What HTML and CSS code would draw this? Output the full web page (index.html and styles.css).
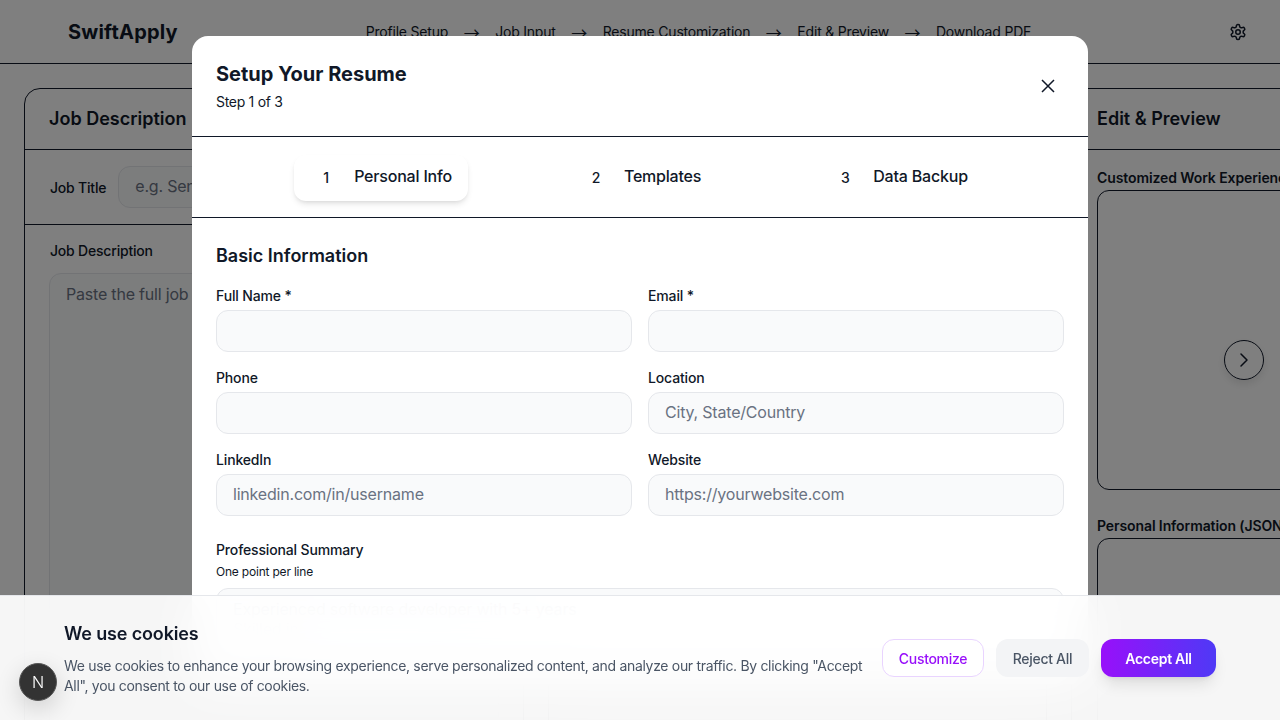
FILE: index.html
```html
<!DOCTYPE html>
<html lang="en">
<head>
  <meta charset="UTF-8">
  <meta name="viewport" content="width=device-width, initial-scale=1.0">
  <title>SwiftApply</title>
  <link rel="stylesheet" href="styles.css">
</head>
<body>
  <header class="topbar">
    <div class="brand">SwiftApply</div>
    <nav class="steps">
      <span>Profile Setup</span><span class="arrow">→</span>
      <span>Job Input</span><span class="arrow">→</span>
      <span>Resume Customization</span><span class="arrow">→</span>
      <span>Edit &amp; Preview</span><span class="arrow">→</span>
      <span>Download PDF</span>
    </nav>
    <button class="icon-btn" title="Settings">
      <svg width="18" height="18" viewBox="0 0 24 24" fill="none" stroke="currentColor" stroke-width="2" stroke-linecap="round" stroke-linejoin="round">
        <path d="M12.22 2h-.44a2 2 0 0 0-2 2v.18a2 2 0 0 1-1 1.73l-.43.25a2 2 0 0 1-2 0l-.15-.08a2 2 0 0 0-2.73.73l-.22.38a2 2 0 0 0 .73 2.73l.15.1a2 2 0 0 1 1 1.72v.51a2 2 0 0 1-1 1.74l-.15.09a2 2 0 0 0-.73 2.73l.22.38a2 2 0 0 0 2.73.73l.15-.08a2 2 0 0 1 2 0l.43.25a2 2 0 0 1 1 1.73V20a2 2 0 0 0 2 2h.44a2 2 0 0 0 2-2v-.18a2 2 0 0 1 1-1.73l.43-.25a2 2 0 0 1 2 0l.15.08a2 2 0 0 0 2.73-.73l.22-.39a2 2 0 0 0-.73-2.73l-.15-.08a2 2 0 0 1-1-1.74v-.5a2 2 0 0 1 1-1.74l.15-.09a2 2 0 0 0 .73-2.73l-.22-.38a2 2 0 0 0-2.73-.73l-.15.08a2 2 0 0 1-2 0l-.43-.25a2 2 0 0 1-1-1.73V4a2 2 0 0 0-2-2z"/>
        <circle cx="12" cy="12" r="3"/>
      </svg>
    </button>
  </header>

  <main class="board">
    <section class="panel">
      <h2 class="panel-title tight">Job Description</h2>
      <div class="job-row">
        <label class="small-label">Job Title</label>
        <input class="field job-input" placeholder="e.g. Senior Software Engineer">
      </div>
      <div class="panel-body">
        <label class="small-label indent">Job Description</label>
        <textarea class="field job-text" placeholder="Paste the full job description here..."></textarea>
      </div>
    </section>
    <section class="panel middle"></section>
    <section class="panel">
      <h2 class="panel-title">Edit &amp; Preview</h2>
      <div class="panel-body preview">
        <label class="bold-label">Customized Work Experience</label>
        <div class="preview-box tall"></div>
        <label class="bold-label">Personal Information (JSON)</label>
        <div class="preview-box"></div>
      </div>
    </section>
  </main>

  <button class="next-btn" title="Next">
    <svg width="24" height="24" viewBox="0 0 24 24" fill="none" stroke="currentColor" stroke-width="1.5" stroke-linecap="round" stroke-linejoin="round"><path d="m9 18 6-6-6-6"/></svg>
  </button>

  <div class="overlay">
    <div class="modal">
      <div class="modal-head">
        <div>
          <h2 class="modal-title">Setup Your Resume</h2>
          <p class="modal-sub">Step 1 of 3</p>
        </div>
        <button class="close-btn" title="Close">
          <svg width="24" height="24" viewBox="0 0 24 24" fill="none" stroke="currentColor" stroke-width="1.5"><path d="M18 6 6 18M6 6l12 12"/></svg>
        </button>
      </div>
      <div class="tabs">
        <div class="tab active"><span class="tab-num">1</span>Personal Info</div>
        <div class="tab"><span class="tab-num">2</span>Templates</div>
        <div class="tab"><span class="tab-num">3</span>Data Backup</div>
      </div>
      <div class="form">
        <h3 class="form-title">Basic Information</h3>
        <div class="form-grid">
          <div><label class="form-label">Full Name *</label><input class="field"></div>
          <div><label class="form-label">Email *</label><input class="field"></div>
          <div><label class="form-label">Phone</label><input class="field"></div>
          <div><label class="form-label">Location</label><input class="field" placeholder="City, State/Country"></div>
          <div><label class="form-label">LinkedIn</label><input class="field" placeholder="linkedin.com/in/username"></div>
          <div><label class="form-label">Website</label><input class="field" placeholder="https://yourwebsite.com"></div>
        </div>
        <label class="form-label summary-label">Professional Summary</label>
        <p class="hint">One point per line</p>
        <textarea class="field summary" placeholder="Experienced software developer with 5+ years
Skilled in"></textarea>
      </div>
    </div>
  </div>

  <div class="cookies">
    <div class="cookie-text">
      <h3 class="cookie-title">We use cookies</h3>
      <p class="cookie-copy">We use cookies to enhance your browsing experience, serve personalized content, and analyze our traffic. By clicking "Accept All", you consent to our use of cookies.</p>
    </div>
    <div class="cookie-actions">
      <button class="btn btn-outline">Customize</button>
      <button class="btn btn-grey">Reject All</button>
      <button class="btn btn-accept">Accept All</button>
    </div>
  </div>

  <div class="dev-badge">N</div>
</body>
</html>
```

FILE: styles.css
```css
* {
  box-sizing: border-box;
}
html, body {
  height: 100%;
}
body {
  margin: 0;
  overflow: hidden;
  font-family: Inter, "Liberation Sans", sans-serif;
  background: #fff;
  color: #101828;
}
button {
  font-family: inherit;
  border: none;
  background: none;
  padding: 0;
  cursor: pointer;
  color: inherit;
}
label {
  display: block;
}

/* top bar */
.topbar {
  height: 64px;
  display: flex;
  align-items: center;
  justify-content: space-between;
  padding: 0 33px 0 68px;
  border-bottom: 1px solid #101828;
}
.brand {
  font-size: 20px;
  font-weight: 700;
  letter-spacing: .2px;
}
.steps {
  display: flex;
  align-items: center;
  gap: 15.5px;
  font-size: 14px;
  letter-spacing: -.2px;
  margin-right: 10px;
}
.arrow {
  font-family: "Noto Sans CJK SC", sans-serif;
  font-size: 16px;
  line-height: 20px;
  letter-spacing: 0;
}
.icon-btn {
  display: flex;
}

/* panels behind the dialog */
.board {
  display: flex;
  gap: 24px;
  padding: 24px;
  height: 656px;
  overflow: hidden;
}
.panel {
  width: 500px;
  height: 720px;
  flex: none;
  border: 1px solid #101828;
  border-radius: 16px;
}
.panel.middle {
  width: 499px;
}
.panel-title {
  margin: 0;
  height: 61px;
  padding: 0 25px 2px;
  display: flex;
  align-items: center;
  font-size: 18px;
  font-weight: 600;
  border-bottom: 1px solid #101828;
}
.panel-title.tight {
  padding-left: 24px;
}
.job-row {
  display: flex;
  align-items: center;
  gap: 12px;
  height: 75px;
  padding: 0 25px;
  border-bottom: 1px solid #101828;
}
.small-label {
  font-size: 14px;
  font-weight: 500;
  letter-spacing: -.2px;
  white-space: nowrap;
}
.small-label.indent {
  padding-left: 1px;
}
.panel-body {
  padding: 17px 24px;
}
.job-text {
  margin-top: 14px;
}
.bold-label {
  font-size: 14px;
  font-weight: 600;
  line-height: 20px;
  letter-spacing: -.1px;
  margin-bottom: 2px;
}
.preview {
  padding: 18px 25px;
}
.preview-box {
  height: 240px;
  border: 1px solid #101828;
  border-radius: 12px;
}
.preview-box.tall {
  height: 300px;
  margin-bottom: 26px;
}
.next-btn {
  position: absolute;
  left: 1224px;
  top: 340px;
  width: 40px;
  height: 40px;
  display: flex;
  align-items: center;
  justify-content: center;
  border: 1px solid #101828;
  border-radius: 50%;
  box-shadow: 0 4px 8px rgba(0, 0, 0, .1);
}

/* dialog */
.overlay {
  position: fixed;
  inset: 0;
  background: rgba(0, 0, 0, .5);
  display: flex;
  align-items: center;
  justify-content: center;
}
.modal {
  width: 896px;
  height: 648px;
  background: #fff;
  border-radius: 16px;
  overflow: hidden;
}
.modal-head {
  height: 101px;
  padding: 24px 24px 0;
  display: flex;
  justify-content: space-between;
  border-bottom: 1px solid #101828;
}
.modal-title {
  margin: 0;
  font-size: 20px;
  line-height: 28px;
  font-weight: 700;
}
.modal-sub {
  margin: 4px 0 0;
  font-size: 14px;
  line-height: 20px;
  letter-spacing: -.3px;
}
.close-btn {
  width: 32px;
  height: 32px;
  margin-top: 10px;
  display: flex;
  align-items: center;
  justify-content: center;
}
.tabs {
  height: 81px;
  padding-right: 2px;
  display: flex;
  justify-content: center;
  align-items: center;
  gap: 96px;
  border-bottom: 1px solid #101828;
}
.tab {
  display: flex;
  align-items: center;
  height: 46px;
  margin-top: 2px;
  padding: 0 16px 5px;
  border-radius: 12px;
  font-size: 16px;
  font-weight: 500;
  letter-spacing: -.2px;
}
.tab.active {
  background: #fff;
  box-shadow: 0 4px 6px -1px rgba(0, 0, 0, .1), 0 2px 4px -2px rgba(0, 0, 0, .1);
}
.tab-num {
  width: 32px;
  margin-right: 12px;
  padding-top: 3px;
  text-align: center;
  font-size: 14px;
}
.form {
  padding: 24px;
}
.form-title {
  margin: 0 0 16px;
  font-size: 18px;
  line-height: 28px;
  font-weight: 600;
}
.form-grid {
  display: grid;
  grid-template-columns: 1fr 1fr;
  gap: 16px;
}
.form-label {
  font-size: 14px;
  font-weight: 500;
  line-height: 20px;
  letter-spacing: -.15px;
  margin-bottom: 4px;
}
.field {
  display: block;
  width: 100%;
  height: 42px;
  padding: 0 16px 2px;
  font-family: inherit;
  font-size: 16px;
  letter-spacing: -.2px;
  color: #101828;
  background: #f9fafb;
  border: 1px solid #e5e7eb;
  border-radius: 12px;
  outline: none;
  resize: none;
}
.field::placeholder {
  color: #6a7282;
  opacity: 1;
}
textarea.field {
  padding-top: 10px;
}
.job-input {
  width: 300px;
}
.job-text.field {
  height: 500px;
}
.summary-label {
  margin-top: 24px;
  margin-bottom: 0;
}
.hint {
  margin: 4px 0 8px;
  font-size: 12px;
  line-height: 16px;
  letter-spacing: -.2px;
}
.summary.field {
  height: 150px;
}

/* cookie banner */
.cookies {
  position: fixed;
  left: 0;
  right: 0;
  bottom: 0;
  height: 125px;
  display: flex;
  align-items: center;
  justify-content: space-between;
  padding: 0 64px;
  background: rgba(255, 255, 255, .93);
  backdrop-filter: blur(24px);
  border-top: 1px solid #e5e7eb;
}
.cookie-text {
  width: 812px;
}
.cookie-title {
  margin: 0 0 8px;
  font-size: 18px;
  line-height: 28px;
  font-weight: 600;
  letter-spacing: -.15px;
}
.cookie-copy {
  margin: 0;
  font-size: 14px;
  line-height: 20px;
  letter-spacing: -.32px;
  color: #4a5565;
}
.cookie-actions {
  display: flex;
  gap: 12px;
}
.btn {
  height: 38px;
  padding: 0;
  border-radius: 12px;
  font-size: 14px;
  font-weight: 500;
  letter-spacing: -.3px;
}
.btn-outline {
  width: 102px;
  background: #fff;
  color: #9810fa;
  border: 1px solid #e9d4ff;
}
.btn-grey {
  width: 93px;
  background: #f3f4f6;
  color: #4a5565;
}
.btn-accept {
  width: 115px;
  color: #fff;
  font-weight: 600;
  background: linear-gradient(to right, #9810fa, #4f39f6);
  box-shadow: 0 10px 15px -3px rgba(0, 0, 0, .1), 0 4px 6px -4px rgba(0, 0, 0, .1);
}

/* dev indicator */
.dev-badge {
  position: fixed;
  left: 19px;
  top: 663px;
  width: 38px;
  height: 38px;
  display: flex;
  align-items: center;
  justify-content: center;
  border-radius: 50%;
  background: #333;
  border: 1px solid #555;
  color: #fff;
  font-size: 16px;
  font-weight: 300;
  box-shadow: 0 8px 24px rgba(0, 0, 0, .16);
}
```
